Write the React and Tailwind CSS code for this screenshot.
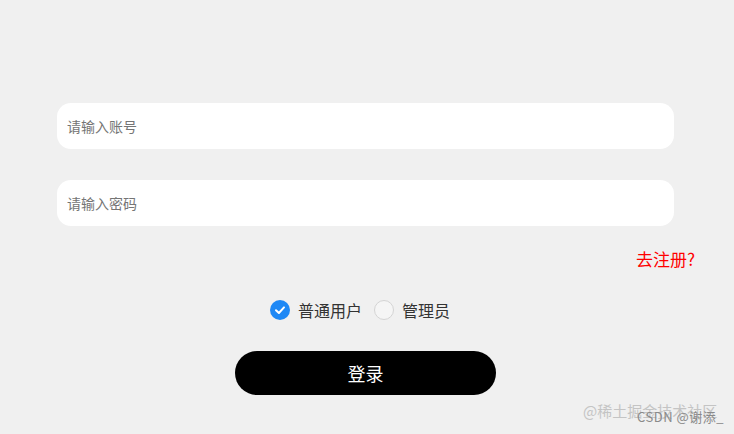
import React, { useState } from 'react';

const font = { fontFamily: '"Microsoft YaHei", "Noto Sans CJK SC", "Noto Sans", sans-serif' };

const Radio = ({ checked, label, onClick }) => (
  <label onClick={onClick} className="flex items-center cursor-pointer">
    {checked ? (
      <span className="w-[20px] h-[20px] rounded-full bg-[#1e88f5] flex items-center justify-center">
        <svg width="12" height="12" viewBox="0 0 12 12" fill="none">
          <path d="M2 6.2 L4.9 9 L10 3.4" stroke="white" strokeWidth="2" strokeLinecap="round" strokeLinejoin="round" />
        </svg>
      </span>
    ) : (
      <span className="w-[20px] h-[20px] rounded-full bg-[#f5f5f5] border border-[#d4d4d4]"></span>
    )}
    <span className="ml-[8px] text-[16px] text-[#333]">{label}</span>
  </label>
);

export default function App() {
  const [role, setRole] = useState('user');

  return (
    <div className="relative w-full h-[434px] bg-[#f0f0f0] overflow-hidden" style={font}>
      <div className="pt-[103px]">
        <div className="ml-[57px] w-[617px] flex flex-col gap-[31px]">
          <input
            type="text"
            placeholder="请输入账号"
            className="h-[46px] w-full bg-white rounded-[14px] pl-[10px] text-[14px] outline-none placeholder:text-[#757575]"
          />
          <input
            type="password"
            placeholder="请输入密码"
            className="h-[46px] w-full bg-white rounded-[14px] pl-[10px] text-[14px] outline-none placeholder:text-[#757575]"
          />
        </div>

        <div className="flex justify-end pr-[39px] mt-[21px]">
          <a className="text-[17px] leading-[24px] text-[#ff0000] cursor-pointer">去注册?</a>
        </div>

        <div className="flex justify-center items-center gap-[12px] mt-[27px] pr-[14px]">
          <Radio checked={role === 'user'} label="普通用户" onClick={() => setRole('user')} />
          <Radio checked={role === 'admin'} label="管理员" onClick={() => setRole('admin')} />
        </div>

        <div className="flex justify-center mt-[29px] pr-[3px]">
          <button className="w-[261px] h-[44px] bg-black text-white text-[18px] rounded-full">
            登录
          </button>
        </div>
      </div>

      <div className="absolute left-[583px] top-[400px] text-[15px] text-[#c4c4c4] whitespace-nowrap">
        @稀土掘金技术社区
      </div>
      <div className="absolute left-[637px] top-[407px] text-[13px] tracking-[0.5px] text-[#8a8a8a] whitespace-nowrap">
        CSDN @谢添_
      </div>
    </div>
  );
}
